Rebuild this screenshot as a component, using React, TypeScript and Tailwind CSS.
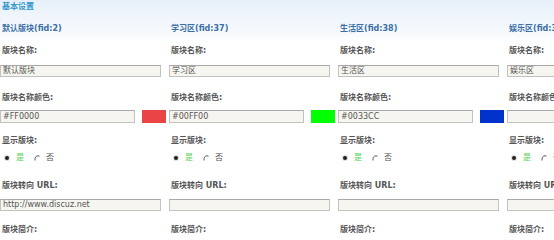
const cols = [
  { title: "默认版块(fid:2)", name: "默认版块", color: "#FF0000", swatch: "#ea4545", url: "http://www.discuz.net" },
  { title: "学习区(fid:37)", name: "学习区", color: "#00FF00", swatch: "#00ff00", url: "" },
  { title: "生活区(fid:38)", name: "生活区", color: "#0033CC", swatch: "#0033cc", url: "" },
  { title: "娱乐区(fid:39)", name: "娱乐区", color: "", swatch: "", url: "" },
];

const cjk = "font-['DejaVu_Sans','Noto_Sans_CJK_SC',sans-serif]";

function Label({ text, className = "" }: { text: React.ReactNode; className?: string }) {
  return (
    <div className={`h-[15px] pl-[2px] text-[8px] leading-[15px] font-bold text-[#555] whitespace-nowrap ${className}`}>
      {text}
    </div>
  );
}

function Field({ value, className = "" }: { value: string; className?: string }) {
  return (
    <div
      className={`border border-[#c2c2c2] border-t-[#a9a9a9] bg-[#f6f5ef] pl-[2px] text-[8px] text-[#555] whitespace-nowrap overflow-hidden ${className}`}
    >
      {value}
    </div>
  );
}

function Radios() {
  return (
    <div className="mt-[4px] flex h-[12px] items-center text-[8px] text-[#555]">
      <span className="ml-[4px] flex h-[6px] w-[6px] items-center justify-center rounded-full bg-[#ddd]">
        <span className="h-[4px] w-[4px] rounded-full bg-[#222]" />
      </span>
      <span className="ml-[6px] text-[#55d455]">是</span>
      <svg className="ml-[10px]" width="7" height="7" viewBox="0 0 7 7">
        <path d="M5.5 1.2 A3 3 0 0 0 1 3.5 L1 5.5" fill="none" stroke="#555" strokeWidth="1" />
      </svg>
      <span className="ml-[5px]">否</span>
    </div>
  );
}

function Column({ c }: { c: (typeof cols)[number] }) {
  return (
    <div className="w-[169px] shrink-0">
      <div className="h-[15px] pl-[2px] text-[8px] leading-[15px] font-bold text-[#3b6fa6] whitespace-nowrap">{c.title}</div>
      <Label text="版块名称:" className="mt-[7px]" />
      <Field value={c.name} className="mt-[7px] h-[12px] w-[161px] leading-[10px]" />
      <Label text="版块名称颜色:" className="mt-[13px]" />
      <div className="mt-[5px] flex h-[13px] items-start">
        <Field value={c.color} className="h-[13px] w-[135px] leading-[11px]" />
        {c.swatch && <div className="ml-[7px] h-[13px] w-[24px]" style={{ backgroundColor: c.swatch }} />}
      </div>
      <Label text="显示版块:" className="mt-[10px]" />
      <Radios />
      <Label text="版块转向 URL:" className="mt-[14px]" />
      <Field value={c.url} className="mt-[6px] h-[12px] w-[161px] leading-[10px]" />
      <Label text="版块简介:" className="mt-[11px]" />
    </div>
  );
}

export default function App() {
  return (
    <div
      className={`h-[236px] w-[554px] overflow-hidden bg-[linear-gradient(#e6eff9_0px,#eef5fb_14px,#f4f8fc_30px,#ffffff_44px)] ${cjk}`}
    >
      <div className="h-[21px] pl-[2px] text-[8px] leading-[13px] font-bold text-[#3399cc]">基本设置</div>
      <div className="flex">
        {cols.map((c) => (
          <Column key={c.title} c={c} />
        ))}
      </div>
    </div>
  );
}
